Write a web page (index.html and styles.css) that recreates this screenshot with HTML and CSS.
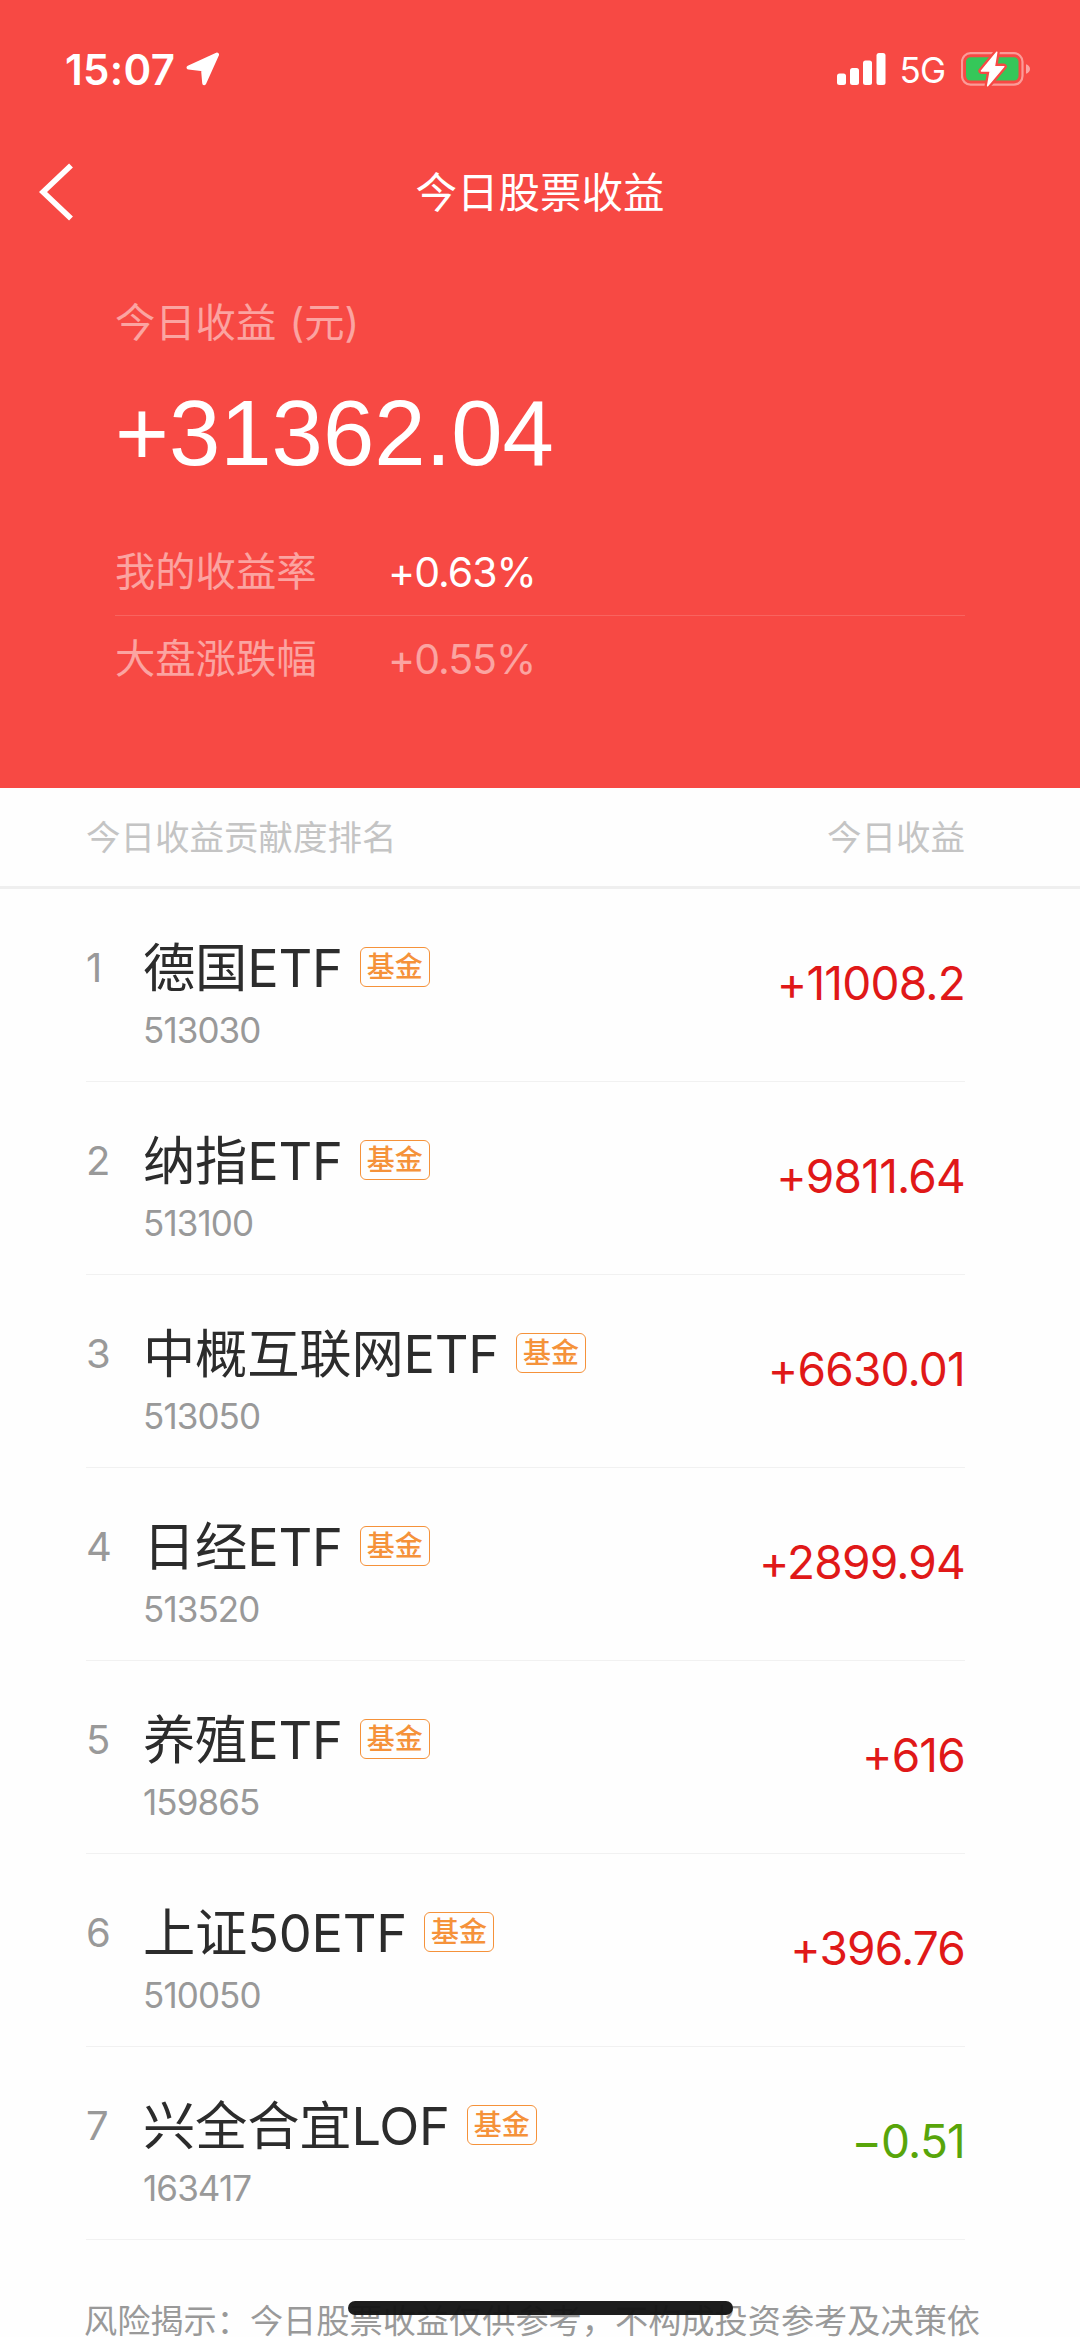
FILE: index.html
```html
<!DOCTYPE html>
<html lang="zh-CN">
<head>
    <meta charset="UTF-8" />
    <meta name="viewport" content="width=device-width, initial-scale=1.0" />
    <title>今日股票收益</title>
    <link rel="stylesheet" href="styles.css">
</head>
<body>
<div class="hero">
    <div class="status-bar">
        <div class="status-left">
            <span class="time">15:07</span>
            <svg class="location" width="34" height="34" viewBox="0 0 34 34">
                <path d="M31 2.6 L2.6 15.6 L17 17.2 L18.2 31.2 Z" fill="#fff" stroke="#fff" stroke-width="4" stroke-linejoin="round"/>
            </svg>
        </div>
        <div class="status-right">
            <svg class="signal" width="49" height="32" viewBox="0 0 49 32" fill="#fff">
                <rect x="0" y="20.5" width="9" height="11.5" rx="2.5"/>
                <rect x="13" y="15" width="9" height="17" rx="2.5"/>
                <rect x="26" y="7.5" width="9" height="24.5" rx="2.5"/>
                <rect x="39.5" y="0" width="9" height="32" rx="2.5"/>
            </svg>
            <span class="network">5G</span>
            <svg class="battery" width="70" height="36" viewBox="0 0 70 36">
                <rect x="1" y="2.2" width="60.5" height="31.4" rx="8.5" fill="none" stroke="#fff" stroke-opacity=".45" stroke-width="2.2"/>
                <path d="M65 13.2 q4 1.5 4 4.8 t-4 4.8 z" fill="#fff" fill-opacity=".5"/>
                <rect x="5" y="6.2" width="52.5" height="23.4" rx="4.5" fill="#35c759"/>
                <path d="M35.8 1.2 L20.4 20 H29.2 L26.6 34.8 L42.8 15.6 H33.4 Z" fill="#fff" stroke="#f74944" stroke-width="6" stroke-linejoin="round"/>
                <path d="M35.8 1.2 L20.4 20 H29.2 L26.6 34.8 L42.8 15.6 H33.4 Z" fill="#fff" stroke="#fff" stroke-width="1.4" stroke-linejoin="round"/>
            </svg>
        </div>
    </div>

    <div class="nav-bar">
        <svg class="back" width="36" height="60" viewBox="0 0 36 60">
            <path d="M32 3.5 L4 30 L32 56.5" fill="none" stroke="#fff" stroke-width="5.6"/>
        </svg>
        <h1>今日股票收益</h1>
    </div>

    <div class="summary">
        <p class="label">今日收益 (元)</p>
        <p class="total">+31362.04</p>
        <div class="rate-row">
            <span class="label">我的收益率</span>
            <span class="rate">+0.63%</span>
        </div>
        <div class="rate-row market">
            <span class="label">大盘涨跌幅</span>
            <span class="rate">+0.55%</span>
        </div>
    </div>
</div>

<div class="list-header">
    <span>今日收益贡献度排名</span>
    <span>今日收益</span>
</div>

<ul class="rank-list">
    <li class="rank-item">
        <span class="index">1</span>
        <div class="stock">
            <p class="name">德国ETF<span class="tag">基金</span></p>
            <p class="code">513030</p>
        </div>
        <span class="amount up">+11008.2</span>
    </li>
    <li class="rank-item">
        <span class="index">2</span>
        <div class="stock">
            <p class="name">纳指ETF<span class="tag">基金</span></p>
            <p class="code">513100</p>
        </div>
        <span class="amount up">+9811.64</span>
    </li>
    <li class="rank-item">
        <span class="index">3</span>
        <div class="stock">
            <p class="name">中概互联网ETF<span class="tag">基金</span></p>
            <p class="code">513050</p>
        </div>
        <span class="amount up">+6630.01</span>
    </li>
    <li class="rank-item">
        <span class="index">4</span>
        <div class="stock">
            <p class="name">日经ETF<span class="tag">基金</span></p>
            <p class="code">513520</p>
        </div>
        <span class="amount up">+2899.94</span>
    </li>
    <li class="rank-item">
        <span class="index">5</span>
        <div class="stock">
            <p class="name">养殖ETF<span class="tag">基金</span></p>
            <p class="code">159865</p>
        </div>
        <span class="amount up">+616</span>
    </li>
    <li class="rank-item">
        <span class="index">6</span>
        <div class="stock">
            <p class="name">上证50ETF<span class="tag">基金</span></p>
            <p class="code">510050</p>
        </div>
        <span class="amount up">+396.76</span>
    </li>
    <li class="rank-item">
        <span class="index">7</span>
        <div class="stock">
            <p class="name">兴全合宜LOF<span class="tag">基金</span></p>
            <p class="code">163417</p>
        </div>
        <span class="amount down">−0.51</span>
    </li>
</ul>

<p class="risk-tip">风险揭示：今日股票收益仅供参考，不构成投资参考及决策依</p>

<div class="home-indicator"></div>
</body>
</html>
```

FILE: styles.css
```css
:root {
    --primary-color: #f74944;
    --up-color: #e01818;
    --down-color: #58a50a;
    --tag-color: #f5923a;
    --text-color: #2c2c2c;
    --text-secondary: #999;
    --text-hint: #c4c4c4;
}

* {
    box-sizing: border-box;
    margin: 0;
    padding: 0;
}

body {
    width: 1080px;
    height: 2337px;
    overflow: hidden;
    font-family: Inter, 'Noto Sans CJK SC', sans-serif;
    font-weight: 400;
    background: #fefefe;
    color: var(--text-color);
}

.hero {
    height: 788px;
    background: var(--primary-color);
    color: #fff;
}

/* 状态栏 */
.status-bar {
    display: flex;
    justify-content: space-between;
    align-items: center;
    height: 138px;
    padding: 0 49px 0 65px;
}

.status-left,
.status-right {
    display: flex;
    align-items: center;
}

.time {
    font-size: 42px;
    font-weight: 600;
    letter-spacing: 0.3px;
}

.location {
    margin-left: 11px;
}

.network {
    margin: 2px 16px 0 14px;
    font-size: 35px;
    letter-spacing: -1px;
}

.nav-bar {
    display: flex;
    align-items: center;
    height: 108px;
    padding: 0 39px;
}

.nav-bar h1 {
    flex: 1;
    margin-right: 36px;
    padding-bottom: 4px;
    text-align: center;
    font-size: 41.5px;
    font-weight: 400;
}

/* 收益汇总 */
.summary {
    padding: 43px 115px 0;
}

.label {
    font-size: 40.3px;
    line-height: 68px;
    word-spacing: 2px;
    color: rgba(255, 255, 255, 0.5);
}

.total {
    margin-bottom: 20px;
    font-family: 'Liberation Sans', Arial, sans-serif;
    font-size: 92.3px;
    line-height: 152px;
}

.rate-row {
    display: flex;
    align-items: center;
    height: 86px;
}

.rate-row .label {
    width: 273px;
}

.rate {
    font-size: 41px;
    letter-spacing: -1px;
}

.market {
    border-top: 1px solid rgba(255, 255, 255, 0.15);
}

.market .rate {
    color: rgba(255, 255, 255, 0.5);
}

/* 排名列表 */
.list-header {
    display: flex;
    justify-content: space-between;
    align-items: center;
    height: 101px;
    padding: 0 115px 4px 86px;
    border-bottom: 3px solid #efefef;
    font-size: 34.5px;
    color: var(--text-hint);
}

.rank-list {
    padding: 0 115px 0 86px;
    list-style: none;
}

.rank-item {
    display: flex;
    height: 193px;
    padding-top: 46px;
    border-bottom: 1px solid #f1f1f1;
}

.index {
    width: 57px;
    font-size: 40px;
    line-height: 66px;
    color: var(--text-secondary);
}

.stock {
    flex: 1;
}

.name {
    display: flex;
    align-items: center;
    height: 62px;
    padding-bottom: 5px;
    font-size: 52.3px;
    letter-spacing: -0.2px;
}

.tag {
    margin: 6px 0 0 17px;
    padding: 0 6px;
    border: 1.5px solid var(--tag-color);
    border-radius: 6px;
    font-size: 28px;
    font-weight: 500;
    line-height: 38px;
    letter-spacing: 0;
    color: var(--tag-color);
}

.code {
    font-size: 35px;
    line-height: 66px;
    letter-spacing: -0.9px;
    color: var(--text-secondary);
}

.amount {
    font-size: 46px;
    line-height: 97px;
    letter-spacing: -0.8px;
}

.up {
    color: var(--up-color);
}

.down {
    color: var(--down-color);
}

.risk-tip {
    padding: 56px 0 0 84px;
    font-size: 33.2px;
    line-height: 50px;
    white-space: nowrap;
    color: var(--text-secondary);
}

.home-indicator {
    position: absolute;
    left: 348px;
    top: 2301px;
    width: 385px;
    height: 14px;
    border-radius: 7px;
    background: rgba(20, 20, 20, 0.96);
}
```
